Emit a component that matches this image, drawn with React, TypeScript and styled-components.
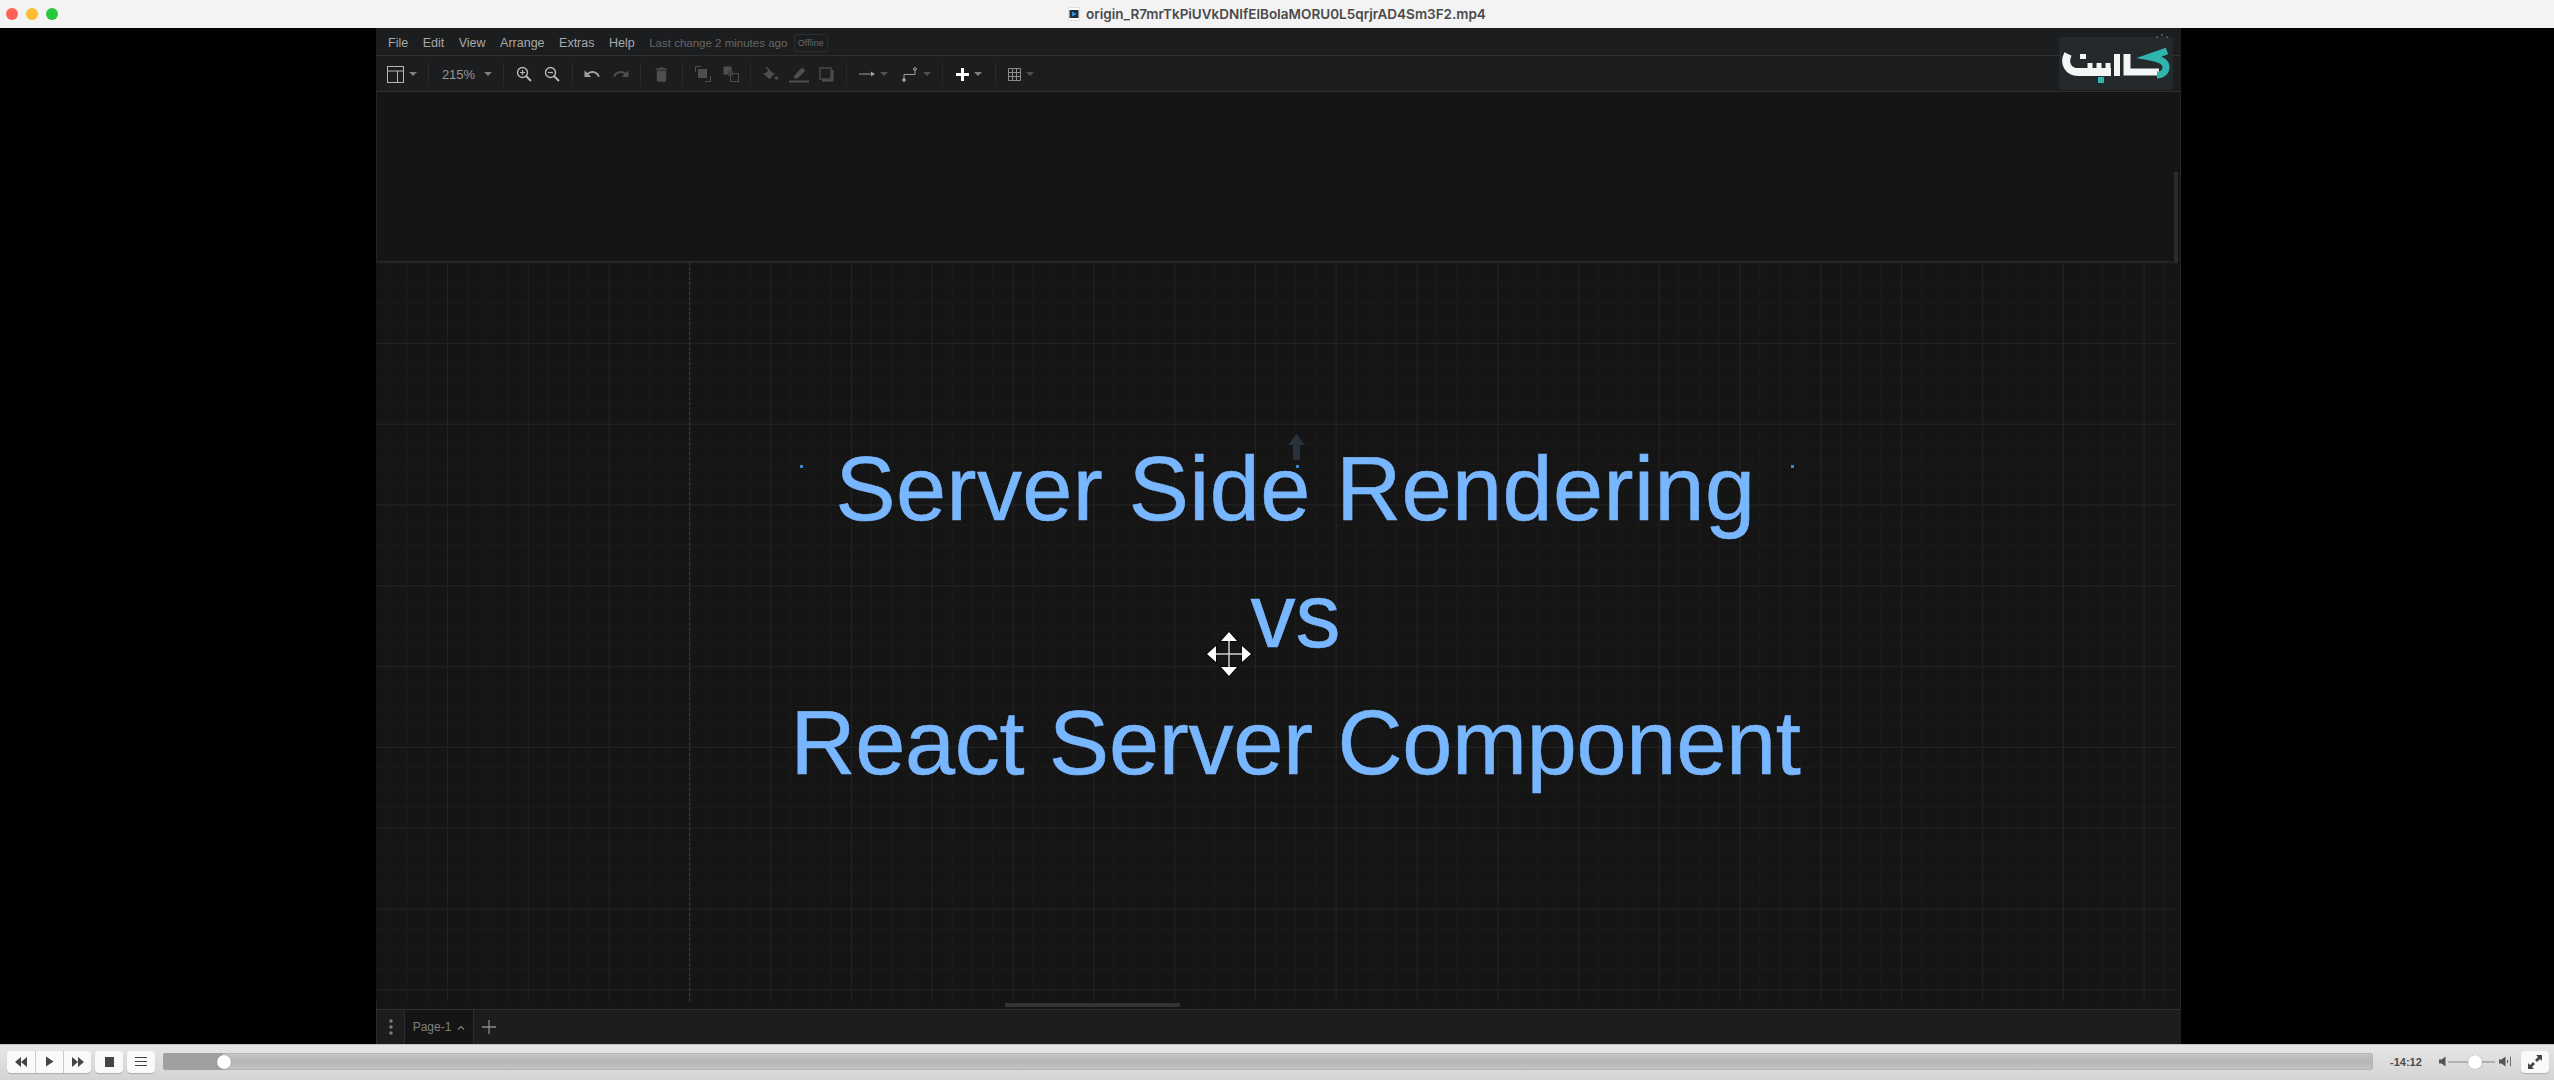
import styled, { createGlobalStyle } from 'styled-components';

const Global = createGlobalStyle`
  html, body { margin: 0; padding: 0; background: #000; }
  body { font-family: "Liberation Sans", Arial, sans-serif; }
`;

const Screen = styled.div`
  width: 2554px;
  height: 1080px;
  display: flex;
  flex-direction: column;
  overflow: hidden;
`;

/* window title */
const TitleBar = styled.div`
  position: relative;
  height: 28px;
  flex: none;
  background: #f3f3f3;
  display: flex;
  align-items: center;
  justify-content: center;
  gap: 6px;
  box-sizing: border-box;
`;

const Lights = styled.div`
  position: absolute;
  left: 6px;
  top: 8px;
  display: flex;
  gap: 8px;
`;

const Light = styled.span<{ $c: string }>`
  width: 12px;
  height: 12px;
  border-radius: 50%;
  background: ${(p) => p.$c};
`;

const FileName = styled.span`
  font-family: Inter, sans-serif;
  font-size: 13.5px;
  font-weight: 600;
  color: #4a4a4a;
`;

const Stage = styled.div`
  flex: 1;
  min-height: 0;
  background: #000;
  padding-left: 376px;
`;

const Editor = styled.div`
  position: relative;
  width: 1805px;
  height: 100%;
  display: flex;
  flex-direction: column;
  background: #151515;
  box-shadow: inset 1px 0 0 #262626, inset -1px 0 0 #262626;
`;

const MenuBar = styled.div`
  height: 28px;
  flex: none;
  box-sizing: border-box;
  background: #1c1d1f;
  border-bottom: 1px solid #2e2f30;
  display: flex;
  align-items: center;
  gap: 14.5px;
  padding: 2px 0 0 12px;
`;

const MenuItem = styled.span`
  font-size: 12.5px;
  color: #a8a8a8;
`;

const LastChange = styled.span`
  font-size: 11.5px;
  color: #666;
`;

const OfflineTag = styled.span`
  font-size: 9px;
  color: #666;
  border: 1px solid #2c2d2e;
  border-radius: 3px;
  padding: 3px 3px;
  margin-left: -8px;
`;

const ToolBar = styled.div`
  height: 36px;
  flex: none;
  box-sizing: border-box;
  background: #1c1d1f;
  border-bottom: 1px solid #2e2f30;
  display: flex;
  align-items: center;
  padding-top: 1px;
`;

const Segment = styled.div<{ $w: number }>`
  width: ${(p) => p.$w}px;
  height: 24px;
  flex: none;
  box-sizing: border-box;
  display: flex;
  align-items: center;
  justify-content: center;
  border-right: 1px solid #28292a;
`;

const Tool = styled.span<{ $w?: number }>`
  width: ${(p) => p.$w ?? 28}px;
  display: flex;
  align-items: center;
  justify-content: center;
`;

const Caret = styled.span<{ $dim?: boolean }>`
  width: 0;
  height: 0;
  margin-left: 5px;
  border-left: 4px solid transparent;
  border-right: 4px solid transparent;
  border-top: 4px solid ${(p) => (p.$dim ? '#505050' : '#808080')};
`;

const ZoomText = styled.span`
  font-size: 13px;
  color: #969696;
  margin: 1px 4px 0 2px;
`;

const BlankArea = styled.div`
  height: 169px;
  flex: none;
  border-bottom: 1px solid #2a2a2a;
  margin-right: 9px;
`;

const Canvas = styled.div`
  position: relative;
  flex: 1;
  min-height: 0;
  margin-right: 4px;
  display: flex;
  flex-direction: column;
  align-items: center;
  padding: 164px 0 0 38px;
  box-sizing: border-box;
  background-color: #151515;
  background-image:
    linear-gradient(to right, #222 1px, transparent 1px),
    linear-gradient(to bottom, #222 1px, transparent 1px),
    linear-gradient(to right, #1a1a1a 1px, transparent 1px),
    linear-gradient(to bottom, #1a1a1a 1px, transparent 1px);
  background-size: 80.8px 80.8px, 80.8px 80.8px, 20.2px 20.2px, 20.2px 20.2px;
  background-position: 71px 0, 0 81px, 10.5px 0, 0 0;
`;

const PageEdge = styled.div`
  position: absolute;
  left: 313px;
  top: 0;
  bottom: 0;
  border-left: 1px dashed #3a3a3a;
`;

const Title = styled.div<{ $track?: number }>`
  font-size: 90px;
  line-height: 127px;
  letter-spacing: ${(p) => p.$track ?? 0}px;
  color: #78b7ff;
  -webkit-text-stroke: 0.6px #78b7ff;
  white-space: nowrap;
  text-align: center;
`;

const Handle = styled.span<{ $x: number }>`
  position: absolute;
  left: ${(p) => p.$x}px;
  top: 203px;
  width: 3px;
  height: 3px;
  background: #3f86c4;
`;

const FloatIcon = styled.svg<{ $x: number; $y: number }>`
  position: absolute;
  left: ${(p) => p.$x}px;
  top: ${(p) => p.$y}px;
`;

const Gutter = styled.div`
  height: 8px;
  flex: none;
  border-bottom: 1px solid #2e2f30;
`;

const HScroll = styled.div`
  position: absolute;
  left: 629px;
  top: 975px;
  width: 175px;
  height: 4px;
  background: #333;
`;

const VScroll = styled.div`
  position: absolute;
  right: 3px;
  top: 144px;
  width: 4px;
  height: 91px;
  background: #2c2c2c;
`;

const LogoBox = styled.div`
  position: absolute;
  left: 1683px;
  top: 9px;
  width: 114px;
  height: 53px;
  background: #24292c;
  border-radius: 3px;
`;

const LogoDots = styled.svg`
  position: absolute;
  right: 4px;
  top: -4px;
`;

const Footer = styled.div`
  height: 34px;
  flex: none;
  background: #1c1d1f;
  display: flex;
  align-items: stretch;
`;

const FooterCell = styled.div<{ $w: number; $dark?: boolean }>`
  width: ${(p) => p.$w}px;
  box-sizing: border-box;
  display: flex;
  align-items: center;
  justify-content: center;
  gap: 6px;
  border-left: 1px solid #2c2d2e;
  background: ${(p) => (p.$dark ? '#151515' : 'transparent')};
`;

const PageName = styled.span`
  font-size: 12px;
  color: #808080;
`;

/* player controls */
const PlayerBar = styled.div`
  height: 36px;
  flex: none;
  box-sizing: border-box;
  background: linear-gradient(#e6e6e6, #d4d4d4);
  border-top: 1px solid #c4c4c4;
  display: flex;
  align-items: center;
  padding: 0 5px 2px 7px;
`;

const ButtonGroup = styled.div`
  display: flex;
  height: 22px;
  margin-right: 4px;
  background: #fafafa;
  border-radius: 4px;
  box-shadow: 0 1px 1px rgba(0, 0, 0, 0.2);
`;

const PlayerButton = styled.span<{ $divider?: boolean }>`
  width: 28px;
  box-sizing: border-box;
  display: flex;
  align-items: center;
  justify-content: center;
  border-left: ${(p) => (p.$divider ? '1px solid #c9c9c9' : 'none')};
`;

const Timeline = styled.div`
  position: relative;
  width: 2211px;
  height: 17px;
  margin-left: 4px;
  border-radius: 3px;
  background: linear-gradient(#c6c6c6, #b6b6b6 50%, #c4c4c4);
  box-shadow: inset 0 0 0 1px #b4b4b4;
`;

const TimelineFill = styled.div`
  width: 60px;
  height: 100%;
  border-radius: 3px 0 0 3px;
  background: #a0a0a0;
`;

const Knob = styled.span<{ $left: number }>`
  position: absolute;
  left: ${(p) => p.$left}px;
  top: 50%;
  width: 14px;
  height: 14px;
  margin-top: -7px;
  border-radius: 50%;
  background: #fff;
  box-shadow: 0 0 1px rgba(0, 0, 0, 0.4);
`;

const TimeLabel = styled.span`
  margin-left: 17px;
  width: 49px;
  font-size: 11px;
  font-weight: 700;
  color: #4c4c4c;
`;

const VolumeTrack = styled.div`
  position: relative;
  width: 47px;
  height: 2px;
  margin: 0 4px 0 2px;
  background: #b0b0b0;
`;

const FullButton = styled(ButtonGroup)`
  width: 28px;
  margin: 0 0 0 10px;
  align-items: center;
  justify-content: center;
`;

const ic = '#b8b8b8';
const off = '#4e4e4e';

function LayoutIcon() {
  return (
    <svg width="17" height="17" viewBox="0 0 17 17" fill="none" stroke={ic} strokeWidth="1">
      <rect x="0.5" y="0.5" width="16" height="16" />
      <path d="M0.5 5H16.5M10.5 5V16.5" />
    </svg>
  );
}

function Magnifier({ plus }: { plus?: boolean }) {
  return (
    <svg width="16" height="16" viewBox="0 0 16 16" fill="none" stroke={ic}>
      <circle cx="6.5" cy="6.5" r="5" strokeWidth="1.4" />
      <path d="M10 10L15 15" strokeWidth="2" />
      <path d={plus ? 'M4 6.5H9M6.5 4V9' : 'M4 6.5H9'} strokeWidth="1.2" />
    </svg>
  );
}

function Filled({ d, color, size = 18 }: { d: string; color: string; size?: number }) {
  return (
    <svg width={size} height={size} viewBox="0 0 24 24" fill={color}>
      <path d={d} />
    </svg>
  );
}

function Layers({ front }: { front?: boolean }) {
  return (
    <svg width="16" height="16" viewBox="0 0 16 16" fill="none">
      {front ? (
        <>
          <path d="M0.5 6V0.5H6M10 15.5H15.5V10" stroke={off} />
          <rect x="3" y="3" width="9" height="9" fill={off} />
        </>
      ) : (
        <>
          <rect x="0.5" y="0.5" width="8" height="8" fill={off} />
          <rect x="7.5" y="7.5" width="8" height="8" stroke={off} />
          <rect x="5" y="5" width="5" height="5" fill="#3e3e3e" />
        </>
      )}
    </svg>
  );
}

function FillIcon() {
  return (
    <svg width="17" height="17" viewBox="0 0 17 17" fill={off}>
      <path d="M1 7H13L7.5 13.5Z" />
      <path d="M4 1L7 4" stroke={off} strokeWidth="1.4" fill="none" />
      <path d="M4 7L7 3.5L11 7Z" />
      <circle cx="14.5" cy="12" r="1.8" />
    </svg>
  );
}

function PenIcon() {
  return (
    <svg width="20" height="17" viewBox="0 0 20 17" fill={off}>
      <path d="M5 10L13 1.5L16.5 4.5L8.5 12.5H5Z" />
      <rect x="0" y="14.5" width="20" height="2" />
    </svg>
  );
}

function ShadowIcon() {
  return (
    <svg width="15" height="15" viewBox="0 0 15 15" fill="none">
      <rect x="1" y="1" width="11" height="11" stroke={off} strokeWidth="1.4" />
      <path d="M3 13.5H13.5V3" stroke={off} strokeWidth="2" />
    </svg>
  );
}

function ArrowIcon() {
  return (
    <svg width="16" height="8" viewBox="0 0 16 8" fill="#9c9c9c">
      <rect x="0" y="3.5" width="13" height="1" />
      <path d="M12 1.5L16 4L12 6.5Z" />
    </svg>
  );
}

function WaypointIcon() {
  return (
    <svg width="16" height="15" viewBox="0 0 16 15" fill="none" stroke="#9c9c9c">
      <path d="M2 13V7.5H13V2" />
      <circle cx="2" cy="13" r="1.4" fill="#9c9c9c" />
      <circle cx="13" cy="2" r="1.4" />
    </svg>
  );
}

function PlusIcon() {
  return (
    <svg width="13" height="13" viewBox="0 0 13 13" fill="#fff">
      <path d="M5 0H8V5H13V8H8V13H5V8H0V5H5Z" />
    </svg>
  );
}

function TableIcon() {
  return (
    <svg width="13" height="13" viewBox="0 0 13 13" fill="none" stroke="#8c8c8c">
      <path d="M0.5 0.5H12.5V12.5H0.5ZM4.5 0.5V12.5M8.5 0.5V12.5M0.5 4.5H12.5M0.5 8.5H12.5" />
    </svg>
  );
}

function ClassbonLogo() {
  return (
    <svg width="114" height="53" viewBox="0 0 114 53" fill="none" role="img" aria-label="logo">
      <g stroke="#f4f6f6" strokeWidth="8">
        <path d="M9 17C4 27 10 35 19 35H52" />
        <path d="M31 33V26M40 33V26M49 33V26" strokeWidth="5" />
        <path d="M58 17V39" strokeWidth="6" />
        <path d="M68 17V35H100" strokeWidth="7" />
      </g>
      <rect x="21" y="17" width="6" height="5" fill="#f4f6f6" />
      <rect x="39" y="40" width="6" height="6" fill="#2fb5ae" />
      <path d="M108 14L91 20C102 22 107 25 107 30C107 35 103 38 98 38" stroke="#2fb5ae" strokeWidth="7" />
    </svg>
  );
}

function MoveCursor() {
  return (
    <FloatIcon $x={830} $y={369} width="46" height="46" viewBox="0 0 46 46">
      <g fill="#000" stroke="#000" strokeWidth="2" opacity="0.75">
        <path d="M23 1L31 10H15ZM23 45L15 36H31ZM1 23L10 15V31ZM45 23L36 15V31Z" />
      </g>
      <path d="M23 10V36M10 23H36" stroke="#111" strokeWidth="3" opacity="0.75" />
      <path d="M23 10V36M10 23H36" stroke="#cfcfcf" strokeWidth="1.5" />
      <path d="M23 1L31 10H15ZM23 45L15 36H31ZM1 23L10 15V31ZM45 23L36 15V31Z" fill="#fff" />
    </FloatIcon>
  );
}

function SpeakerIcon({ waves }: { waves?: boolean }) {
  return (
    <svg width={waves ? 12 : 7} height="11" viewBox={waves ? '0 0 12 11' : '0 0 7 11'} fill="#555">
      <path d="M0 3.5H2.5L6.5 0.5V10.5L2.5 7.5H0Z" />
      {waves ? <path d="M8 4H9V7H8ZM11 0.5H11.8V10.5H11Z" /> : null}
    </svg>
  );
}

const TriLeft = 'M11 1V11L5 6ZM5 1V11L-1 6Z';

export default function App() {
  return (
    <Screen>
      <Global />
      <TitleBar>
        <Lights>
          <Light $c="#ff5f57" />
          <Light $c="#febc2e" />
          <Light $c="#28c840" />
        </Lights>
        <svg width="12" height="14" viewBox="0 0 12 14">
          <rect x="0.5" y="0.5" width="11" height="13" rx="1" fill="#fff" stroke="#ddd" />
          <rect x="1.5" y="3" width="9" height="8" fill="#1f2f3f" />
          <path d="M4 4.5L8.5 7L4 9.5Z" fill="#2f9ae0" />
        </svg>
        <FileName>origin_R7mrTkPiUVkDNIfElBoIaMORU0L5qrjrAD4Sm3F2.mp4</FileName>
      </TitleBar>

      <Stage>
        <Editor>
          <MenuBar>
            <MenuItem>File</MenuItem>
            <MenuItem>Edit</MenuItem>
            <MenuItem>View</MenuItem>
            <MenuItem>Arrange</MenuItem>
            <MenuItem>Extras</MenuItem>
            <MenuItem>Help</MenuItem>
            <LastChange>Last change 2 minutes ago</LastChange>
            <OfflineTag>Offline</OfflineTag>
          </MenuBar>

          <ToolBar>
            <Segment $w={53}>
              <LayoutIcon />
              <Caret />
            </Segment>
            <Segment $w={75}>
              <ZoomText>215%</ZoomText>
              <Caret />
            </Segment>
            <Segment $w={69}>
              <Tool><Magnifier plus /></Tool>
              <Tool><Magnifier /></Tool>
            </Segment>
            <Segment $w={68}>
              <Tool $w={29}>
                <Filled color="#a0a0a0" d="M12.5,8C9.85,8 7.45,9 5.6,10.6L2,7V16H11L7.38,12.38C8.77,11.22 10.54,10.5 12.5,10.5C16.04,10.5 19.05,12.81 20.1,16L22.47,15.22C21.08,11.03 17.15,8 12.5,8Z" />
              </Tool>
              <Tool $w={29}>
                <Filled color={off} d="M18.4,10.6C16.55,9 14.15,8 11.5,8C6.85,8 2.92,11.03 1.54,15.22L3.9,16C4.95,12.81 7.95,10.5 11.5,10.5C13.45,10.5 15.23,11.22 16.62,12.38L13,16H22V7L18.4,10.6Z" />
              </Tool>
            </Segment>
            <Segment $w={42}>
              <Filled color={off} size={19} d="M19,4H15.5L14.5,3H9.5L8.5,4H5V6H19M6,19A2,2 0 0,0 8,21H16A2,2 0 0,0 18,19V7H6V19Z" />
            </Segment>
            <Segment $w={68}>
              <Tool><Layers front /></Tool>
              <Tool><Layers /></Tool>
            </Segment>
            <Segment $w={96}>
              <Tool><FillIcon /></Tool>
              <Tool><PenIcon /></Tool>
              <Tool><ShadowIcon /></Tool>
            </Segment>
            <Segment $w={96}>
              <ArrowIcon />
              <Caret $dim />
              <Tool $w={14} />
              <WaypointIcon />
              <Caret $dim />
            </Segment>
            <Segment $w={53}>
              <PlusIcon />
              <Caret />
            </Segment>
            <Tool $w={50}>
              <TableIcon />
              <Caret $dim />
            </Tool>
          </ToolBar>

          <BlankArea />

          <Canvas>
            <PageEdge />
            <Title $track={0.45}>Server Side Rendering</Title>
            <Title>vs</Title>
            <Title $track={-0.25}>React Server Component</Title>
            <Handle $x={424} />
            <Handle $x={920} />
            <Handle $x={1415} />
            <FloatIcon $x={912} $y={172} width="17" height="26" viewBox="0 0 17 26">
              <path d="M8.5 0L17 11H12V26H5V11H0Z" fill="#27323d" />
            </FloatIcon>
            <MoveCursor />
          </Canvas>

          <Gutter />

          <Footer>
            <FooterCell $w={28}>
              <svg width="4" height="16" viewBox="0 0 4 16" fill="#808080">
                <circle cx="2" cy="2" r="1.7" />
                <circle cx="2" cy="8" r="1.7" />
                <circle cx="2" cy="14" r="1.7" />
              </svg>
            </FooterCell>
            <FooterCell $w={69} $dark>
              <PageName>Page-1</PageName>
              <svg width="8" height="5" viewBox="0 0 8 5" fill="none" stroke="#808080" strokeWidth="1.2">
                <path d="M1 4.5L4 1.5L7 4.5" />
              </svg>
            </FooterCell>
            <FooterCell $w={30}>
              <svg width="14" height="14" viewBox="0 0 14 14" stroke="#8a8a8a" strokeWidth="1.3">
                <path d="M7 0V14M0 7H14" />
              </svg>
            </FooterCell>
          </Footer>

          <HScroll />
          <VScroll />
          <LogoBox>
            <ClassbonLogo />
            <LogoDots width="14" height="6" viewBox="0 0 14 6" fill="#6a6a6a">
              <circle cx="2" cy="4" r="0.9" />
              <circle cx="7" cy="2" r="0.9" />
              <circle cx="12" cy="4" r="0.9" />
            </LogoDots>
          </LogoBox>
        </Editor>
      </Stage>

      <PlayerBar>
        <ButtonGroup>
          <PlayerButton>
            <svg width="14" height="12" viewBox="-1 0 12 12" fill="#444"><path d={TriLeft} /></svg>
          </PlayerButton>
          <PlayerButton $divider>
            <svg width="9" height="11" viewBox="0 0 9 11" fill="#444"><path d="M1 0.5L8.5 5.5L1 10.5Z" /></svg>
          </PlayerButton>
          <PlayerButton $divider>
            <svg width="14" height="12" viewBox="-1 0 12 12" fill="#444" transform="scale(-1 1)"><path d={TriLeft} /></svg>
          </PlayerButton>
        </ButtonGroup>
        <ButtonGroup>
          <PlayerButton>
            <svg width="9" height="10" viewBox="0 0 9 10" fill="#444"><rect width="9" height="10" /></svg>
          </PlayerButton>
        </ButtonGroup>
        <ButtonGroup>
          <PlayerButton>
            <svg width="12" height="9" viewBox="0 0 12 9" stroke="#444" strokeWidth="1"><path d="M0 0.5H12M0 4.5H12M0 8.5H12" /></svg>
          </PlayerButton>
        </ButtonGroup>
        <Timeline>
          <TimelineFill />
          <Knob $left={54} />
        </Timeline>
        <TimeLabel>-14:12</TimeLabel>
        <SpeakerIcon />
        <VolumeTrack>
          <Knob $left={20} />
        </VolumeTrack>
        <SpeakerIcon waves />
        <FullButton>
          <svg width="14" height="14" viewBox="0 0 14 14" fill="#444">
            <path d="M8 0H14V6L12 4L9 7L7 5L10 2ZM0 14V8L2 10L5 7L7 9L4 12L6 14Z" />
          </svg>
        </FullButton>
      </PlayerBar>
    </Screen>
  );
}
